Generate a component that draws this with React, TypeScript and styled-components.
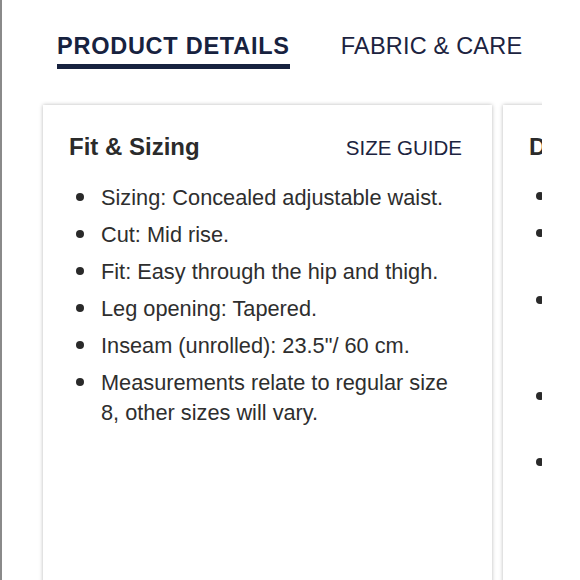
import React from "react";
import styled, { createGlobalStyle } from "styled-components";

const GlobalStyle = createGlobalStyle`
  html, body {
    margin: 0;
    padding: 0;
    background: #ffffff;
  }
  body {
    font-family: "Liberation Sans", Arial, Helvetica, sans-serif;
    -webkit-font-smoothing: antialiased;
  }
  * { box-sizing: border-box; }
`;

const Page = styled.div`
  min-height: 580px;
  height: 580px;
  overflow: hidden;
  border-left: 2px solid #8a8a8a;
  background: #ffffff;
`;

const Tabs = styled.nav`
  display: flex;
  gap: 51px;
  padding: 32px 0 0 55px;
`;

const Tab = styled.div<{ $active?: boolean }>`
  font-size: 23.5px;
  line-height: 28px;
  font-weight: ${(p) => (p.$active ? 700 : 400)};
  letter-spacing: ${(p) => (p.$active ? "0.75px" : "0.2px")};
  color: ${(p) => (p.$active ? "#17223f" : "#1c2340")};
  padding-bottom: 4px;
  border-bottom: 5px solid ${(p) => (p.$active ? "#17223f" : "transparent")};
  white-space: nowrap;
`;

const Carousel = styled.div`
  display: flex;
  gap: 11px;
  width: 540px;
  margin-top: 32px;
  padding: 4px 0 0 41px;
  overflow: hidden;
`;

const Card = styled.section`
  flex: 0 0 449px;
  min-height: 520px;
  background: #ffffff;
  box-shadow: 0 0 4px rgba(0, 0, 0, 0.28);
  padding: 28px 30px 0 26px;
`;

const CardHeader = styled.header`
  display: flex;
  justify-content: space-between;
  align-items: baseline;
  white-space: nowrap;
`;

const CardTitle = styled.h2`
  margin: 0;
  font-size: 24px;
  line-height: 28px;
  font-weight: 700;
  color: #2b2b2b;
`;

const HeaderLink = styled.a`
  font-size: 20.5px;
  line-height: 28px;
  color: #1c2340;
  text-decoration: none;
`;

const List = styled.ul`
  list-style: none;
  margin: 21px 0 0;
  padding: 0 0 0 7px;
  display: flex;
  flex-direction: column;
  gap: 7.5px;
`;

const Item = styled.li`
  display: grid;
  grid-template-columns: 8px 1fr;
  column-gap: 17px;
  font-size: 21.75px;
  line-height: 29.5px;
  color: #2e2e2e;
`;

const Dot = styled.span`
  width: 8px;
  height: 8px;
  margin-top: 10.25px;
  border-radius: 50%;
  background: #2a2a2a;
`;

const fitItems = [
  "Sizing: Concealed adjustable waist.",
  "Cut: Mid rise.",
  "Fit: Easy through the hip and thigh.",
  "Leg opening: Tapered.",
  "Inseam (unrolled): 23.5\"/ 60 cm.",
  "Measurements relate to regular size 8, other sizes will vary.",
];

const detailItems = [
  "Five-pocket styling.",
  "Zip fly with button closure and tonal stitching.",
  "Rolled cuffs can be worn down for a longer, cleaner look with flats or heels.",
  "Belt loops at waist and back yoke seam.",
  "Imported.",
];

export default function App() {
  return (
    <>
      <GlobalStyle />
      <Page>
        <Tabs>
          <Tab $active>PRODUCT DETAILS</Tab>
          <Tab>FABRIC &amp; CARE</Tab>
        </Tabs>
        <Carousel>
          <Card>
            <CardHeader>
              <CardTitle>Fit &amp; Sizing</CardTitle>
              <HeaderLink href="#">SIZE GUIDE</HeaderLink>
            </CardHeader>
            <List>
              {fitItems.map((t) => (
                <Item key={t}>
                  <Dot />
                  <span>{t}</span>
                </Item>
              ))}
            </List>
          </Card>
          <Card>
            <CardHeader>
              <CardTitle>Details</CardTitle>
            </CardHeader>
            <List>
              {detailItems.map((t) => (
                <Item key={t}>
                  <Dot />
                  <span>{t}</span>
                </Item>
              ))}
            </List>
          </Card>
        </Carousel>
      </Page>
    </>
  );
}
